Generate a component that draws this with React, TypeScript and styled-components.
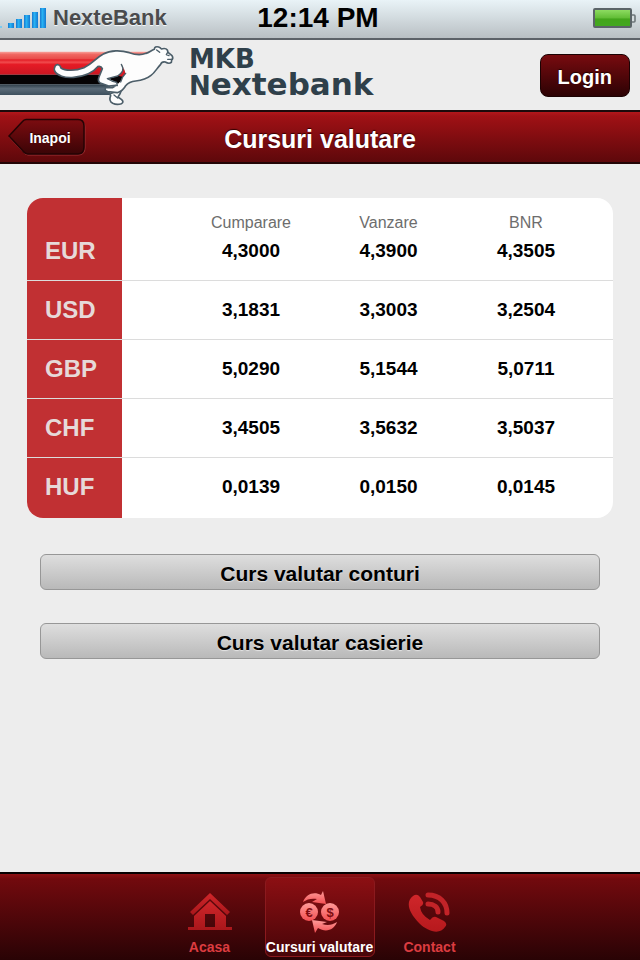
import React from "react";
import styled, { createGlobalStyle } from "styled-components";

const GlobalStyle = createGlobalStyle`
  *, *::before, *::after { box-sizing: border-box; }
  body {
    margin: 0;
    background: #ededed;
    font-family: "Liberation Sans", Arial, Helvetica, sans-serif;
  }
  button { font-family: inherit; cursor: pointer; }
`;

const Screen = styled.div`
  display: flex;
  flex-direction: column;
  min-height: 100vh;
`;

const StatusBar = styled.div`
  display: grid;
  grid-template-columns: 1fr auto 1fr;
  align-items: center;
  height: 40px;
  padding: 0 4px 2px 0;
  background: linear-gradient(#e9f3f7, #d6dfe3 40%, #b9bfc3);
  border-bottom: 2px solid #5d6268;
`;

const Carrier = styled.div`
  display: flex;
  align-items: center;
  gap: 6px;
  color: #4a4b4d;
  font-size: 22px;
  font-weight: bold;
  line-height: 28px;
  text-shadow: 0 1px 0 #f2f6f8;
`;

const Clock = styled.time`
  color: #000;
  font-size: 28px;
  font-weight: bold;
  line-height: 32px;
`;

const BatterySlot = styled.div`
  display: flex;
  justify-content: flex-end;
`;

const Header = styled.header`
  display: flex;
  align-items: center;
  height: 70px;
  padding-right: 10px;
`;

const Brand = styled.div`
  display: flex;
  align-items: center;
  gap: 14px;
  flex: 1;
`;

const Wordmark = styled.div`
  display: flex;
  flex-direction: column;
  padding-bottom: 4px;
  color: #2f404a;
  font-family: "DejaVu Sans", sans-serif;
  font-weight: bold;
  font-size: 31px;
  line-height: 25px;
`;

const Capitals = styled.span`
  font-size: 26px;
`;

const LoginButton = styled.button`
  height: 43px;
  padding: 4px 17px 0;
  border: 1px solid #1c0203;
  border-radius: 8px;
  background: linear-gradient(#780b0f, #2c0204);
  color: #fff;
  font-size: 20px;
  font-weight: bold;
  text-shadow: 0 -1px 1px #200;
`;

const TitleBar = styled.div`
  display: grid;
  grid-template-columns: 1fr auto 1fr;
  align-items: center;
  height: 54px;
  padding: 0 8px;
  border-top: 2px solid #1c0a0b;
  border-bottom: 2px solid #240506;
  background: linear-gradient(#b3171b, #a01115 8%, #5e080b);
`;

const BackButton = styled.button`
  display: grid;
  justify-self: start;
  padding: 0;
  border: 0;
  background: none;
  color: #fff;
  font-size: 14px;
  font-weight: bold;
  text-shadow: 0 -1px 1px #200;

  & > * { grid-area: 1 / 1; }
`;

const BackLabel = styled.span`
  align-self: center;
  padding: 2px 0 0 6px;
`;

const Title = styled.h1`
  margin: 0;
  padding-top: 4px;
  color: #fff;
  font-size: 25px;
  line-height: 30px;
  text-shadow: 0 -1px 1px #300;
`;

const Content = styled.main`
  flex: 1;
  padding: 34px 27px;
`;

const Rates = styled.table`
  width: 100%;
  table-layout: fixed;
  border-spacing: 0;
  border-radius: 16px;
  overflow: hidden;
  background: #fff;
`;

const LabelColumn = styled.col`
  width: 95px;
`;

const ValueColumn = styled.col<{ $weight: number }>`
  width: ${(p) => p.$weight}px;
`;

const HeadCell = styled.th`
  height: 34px;
  padding: 16px 0 0;
  color: #6d6d6d;
  font-size: 16px;
  font-weight: normal;
  line-height: 18px;

  &:nth-child(2) { padding-left: 60px; }
  &:last-child { padding-right: 18px; }
`;

const CornerCell = styled.td`
  padding: 0;
  background: #c13033;
`;

const RateRow = styled.tr<{ $first: boolean }>`
  & > * {
    height: ${(p) => (p.$first ? 49 : 59)}px;
    padding: 0 0 ${(p) => (p.$first ? 10 : 0)}px;
    border-bottom: 1px solid #dcdcdc;
  }
  &:last-child > * {
    height: 60px;
    padding-bottom: 2px;
    border-bottom: 0;
  }
  & > :nth-child(2) { padding-left: 60px; }
  & > :last-child { padding-right: 18px; }
`;

const Currency = styled.th`
  background: #c13033;
  color: #e6d9d9;
  font-size: 24px;
  line-height: 28px;
  text-align: left;
  text-indent: 18px;
`;

const Rate = styled.td`
  color: #000;
  font-size: 19px;
  font-weight: bold;
  line-height: 22px;
  text-align: center;
`;

const Actions = styled.div`
  display: grid;
  gap: 33px;
  padding: 36px 13px;
`;

const ActionButton = styled.button`
  height: 36px;
  padding: 4px 0 0;
  border: 1px solid #979797;
  border-radius: 6px;
  background: linear-gradient(#dedede, #b9b9b9);
  color: #000;
  font-size: 21px;
  font-weight: bold;
  line-height: 24px;
  text-shadow: 0 1px 1px #e4e4e4;
`;

const TabBar = styled.nav`
  display: flex;
  justify-content: center;
  height: 88px;
  padding: 3px 1px 3px 0;
  border-top: 2px solid #080102;
  background: linear-gradient(#8e1013, #720a0e 6%, #290305);
`;

const Tab = styled.a<{ $active?: boolean }>`
  display: flex;
  flex-direction: column;
  align-items: center;
  width: 110px;
  padding-top: 12px;
  border: 1px solid ${(p) => (p.$active ? "#8b1a1e" : "transparent")};
  border-radius: 6px;
  background: ${(p) => (p.$active ? "linear-gradient(#8c0f13, #480508)" : "none")};
  color: ${(p) => (p.$active ? "#fff" : "#dc3c40")};
  font-size: 14px;
  font-weight: bold;
  line-height: 18px;
  text-decoration: none;
  white-space: nowrap;

  & > svg { margin-bottom: 4px; }
`;

const SignalIcon = () => (
  <svg width="47" height="28" viewBox="0 0 47 28" aria-hidden="true">
    <defs>
      <linearGradient id="signal" x1="0" x2="1">
        <stop offset="0" stopColor="#1877cf" />
        <stop offset="0.4" stopColor="#28b3f3" />
        <stop offset="1" stopColor="#1479d2" />
      </linearGradient>
    </defs>
    <rect x="0" y="22" width="2" height="2" fill="#7ccbf0" />
    {[5, 9, 13, 16, 20].map((h, i) => (
      <rect key={h} x={8 + i * 8} y={24 - h} width="6" height={h} fill="url(#signal)" />
    ))}
  </svg>
);

const BatteryIcon = () => (
  <svg width="43" height="20" viewBox="0 0 43 20" role="img" aria-label="Battery full">
    <defs>
      <linearGradient id="charge" x2="0" y2="1">
        <stop offset="0" stopColor="#92df66" />
        <stop offset="0.5" stopColor="#62bd36" />
        <stop offset="0.55" stopColor="#43a51b" />
        <stop offset="1" stopColor="#43a821" />
      </linearGradient>
    </defs>
    <rect x="1" y="1" width="37" height="18" rx="1" fill="url(#charge)" stroke="#5b6468" strokeWidth="2" />
    <path d="M39 7h2q1 0 1 1v5q0 1-1 1h-2" fill="#d5dcdf" stroke="#6d7679" strokeWidth="1.6" />
  </svg>
);

const CheetahLogo = () => (
  <svg width="175" height="70" viewBox="0 120 525 210" aria-hidden="true">
    <defs>
      <linearGradient id="redStripe" x2="0" y2="1">
        <stop offset="0" stopColor="#f9a49d" />
        <stop offset="0.12" stopColor="#f06862" />
        <stop offset="0.3" stopColor="#e94e4b" />
        <stop offset="0.36" stopColor="#e41f27" />
        <stop offset="0.46" stopColor="#f14b4d" />
        <stop offset="0.56" stopColor="#e51b25" />
        <stop offset="1" stopColor="#cb1722" />
      </linearGradient>
      <linearGradient id="slateStripe" x2="0" y2="1">
        <stop offset="0" stopColor="#2c3c47" />
        <stop offset="0.4" stopColor="#5b6b78" />
        <stop offset="1" stopColor="#3d505e" />
      </linearGradient>
    </defs>
    <path d="M0 155H450L430 185 380 224H0Z" fill="url(#redStripe)" />
    <path d="M0 224H380L350 253H0Z" fill="#050304" />
    <path d="M0 253H330V285H0Z" fill="url(#slateStripe)" />
    <g fill="#fdfdfd" stroke="#4c5e69" strokeWidth="5" strokeLinejoin="round">
      <path d="M329 282L332 287Q325 303 338 310Q351 316 364 311Q373 307 365 299L354 291Q361 283 365 268Z" />
      <path d="M165 199C170 191 180 193 183 204C195 213 226 213 252 203C279 191 287 174 310 162C331 150 363 150 388 158C409 166 424 166 438 160C448 157 454 151 463 148Q464 138 476 141Q482 143 484 147Q497 143 502 150L504 157 516 167Q521 175 515 180L514 187Q507 193 496 186Q485 184 482 193C471 204 465 218 453 226C442 235 424 241 407 243Q387 245 377 257Q370 272 352 278L323 275Q312 272 317 263L337 263 349 256 326 258 301 249Q292 244 297 231L307 206Q303 197 293 200C278 219 249 229 221 232C194 235 171 226 164 213Q161 207 165 199Z" />
    </g>
    <path d="M370 200C374 211 362 219 351 229L326 236 342 244 354 251 362 244 368 231 375 222Z" fill="#080506" />
    <path d="M370 200C373 212 364 219 354 227L367 230 376 219Z" fill="#d71b25" />
    <path d="M364 193C374 209 367 218 353 228L322 236 336 243 350 247 352 257M377 220L368 231 362 246M503 157L499 164 507 167M514 178L503 178M470 150L479 157M342 285L353 294" fill="none" stroke="#4c5e69" strokeWidth="4" strokeLinecap="round" strokeLinejoin="round" />
  </svg>
);

const BackShape = () => (
  <svg width="78" height="38" viewBox="0 0 78 38" aria-hidden="true">
    <defs>
      <linearGradient id="back" x2="0" y2="1">
        <stop offset="0" stopColor="#7c0c10" />
        <stop offset="1" stopColor="#3a0406" />
      </linearGradient>
    </defs>
    <path d="M18 2.500H70Q77 2.500 77 9V30Q77 37 70 37H20Q17 37 14 33L1 19Z" fill="none" stroke="#9c3034" />
    <path d="M18 1.500H70Q76 1.500 76 8V29Q76 36 70 36H20Q17 36 14 32L1 18 14 4Q16 1.500 18 1.500Z" fill="url(#back)" stroke="#240304" strokeWidth="1.500" />
  </svg>
);

const HomeIcon = () => (
  <svg width="44" height="44" viewBox="0 0 44 44" aria-hidden="true">
    <defs>
      <linearGradient id="home" x2="0" y2="1">
        <stop offset="0" stopColor="#d0262a" />
        <stop offset="1" stopColor="#a9171b" />
      </linearGradient>
    </defs>
    <path d="M22 3L42 22 39 25 22 9 5 25 2 22Z" fill="url(#home)" />
    <path d="M22 11L38 26V37H44V40H0V37H6V26ZM17 24V37H27V24Z" fill="url(#home)" fillRule="evenodd" />
  </svg>
);

const ExchangeIcon = () => (
  <svg width="40" height="44" viewBox="0 0 40 44" aria-hidden="true">
    <defs>
      <linearGradient id="exchange" x2="0" y2="1">
        <stop offset="0" stopColor="#ff9b99" />
        <stop offset="1" stopColor="#f24f52" />
      </linearGradient>
    </defs>
    <g fill="url(#exchange)">
      <path d="M3 12C6 4 14 1 21 5L23 1 26 14 12 12 17 9C12 8 7 9 3 12Z" />
      <path d="M37 32C34 40 26 43 18 38L15 43 12 30 27 32 22 34C28 36 32 35 37 32Z" />
      <circle cx="9" cy="22" r="9" />
      <circle cx="30" cy="22" r="9" />
    </g>
    <g fill="#800c10" fontFamily="Liberation Sans, sans-serif" fontSize="13" fontWeight="bold" textAnchor="middle">
      <text x="9" y="27">€</text>
      <text x="30" y="27">$</text>
    </g>
  </svg>
);

const PhoneIcon = () => (
  <svg width="44" height="44" viewBox="0 0 44 44" aria-hidden="true">
    <defs>
      <linearGradient id="phone" x2="0" y2="1">
        <stop offset="0" stopColor="#d0262a" />
        <stop offset="1" stopColor="#b6191d" />
      </linearGradient>
    </defs>
    <path d="M5 6Q9 3 12 7L15 12Q16 15 12 17Q13 25 22 30Q25 26 28 27L36 31Q40 34 37 37C32 45 20 42 11 33C1 23-3 12 5 6Z" fill="url(#phone)" />
    <path d="M20 5C32 5 39 13 39 23M20 14C26 14 30 17 30 22" fill="none" stroke="#c22328" strokeWidth="5" strokeLinecap="round" />
  </svg>
);

const rates = [
  { currency: "EUR", values: ["4,3000", "4,3900", "4,3505"] },
  { currency: "USD", values: ["3,1831", "3,3003", "3,2504"] },
  { currency: "GBP", values: ["5,0290", "5,1544", "5,0711"] },
  { currency: "CHF", values: ["3,4505", "3,5632", "3,5037"] },
  { currency: "HUF", values: ["0,0139", "0,0150", "0,0145"] },
];

export default function App() {
  return (
    <Screen>
      <GlobalStyle />
      <StatusBar>
        <Carrier>
          <SignalIcon />
          NexteBank
        </Carrier>
        <Clock>12:14 PM</Clock>
        <BatterySlot>
          <BatteryIcon />
        </BatterySlot>
      </StatusBar>
      <Header>
        <Brand>
          <CheetahLogo />
          <Wordmark>
            <Capitals>MKB</Capitals>
            <span>
              <Capitals>N</Capitals>extebank
            </span>
          </Wordmark>
        </Brand>
        <LoginButton type="button">Login</LoginButton>
      </Header>
      <TitleBar>
        <BackButton type="button">
          <BackShape />
          <BackLabel>Inapoi</BackLabel>
        </BackButton>
        <Title>Cursuri valutare</Title>
      </TitleBar>
      <Content>
        <Rates>
          <colgroup>
            <LabelColumn />
            <ValueColumn $weight={198} />
            <ValueColumn $weight={137} />
            <ValueColumn $weight={156} />
          </colgroup>
          <thead>
            <tr>
              <CornerCell />
              <HeadCell scope="col">Cumparare</HeadCell>
              <HeadCell scope="col">Vanzare</HeadCell>
              <HeadCell scope="col">BNR</HeadCell>
            </tr>
          </thead>
          <tbody>
            {rates.map((row, index) => (
              <RateRow key={row.currency} $first={index === 0}>
                <Currency scope="row">{row.currency}</Currency>
                {row.values.map((value) => (
                  <Rate key={value}>{value}</Rate>
                ))}
              </RateRow>
            ))}
          </tbody>
        </Rates>
        <Actions>
          <ActionButton type="button">Curs valutar conturi</ActionButton>
          <ActionButton type="button">Curs valutar casierie</ActionButton>
        </Actions>
      </Content>
      <TabBar>
        <Tab href="#acasa">
          <HomeIcon />
          Acasa
        </Tab>
        <Tab href="#cursuri" $active aria-current="page">
          <ExchangeIcon />
          Cursuri valutare
        </Tab>
        <Tab href="#contact">
          <PhoneIcon />
          Contact
        </Tab>
      </TabBar>
    </Screen>
  );
}
